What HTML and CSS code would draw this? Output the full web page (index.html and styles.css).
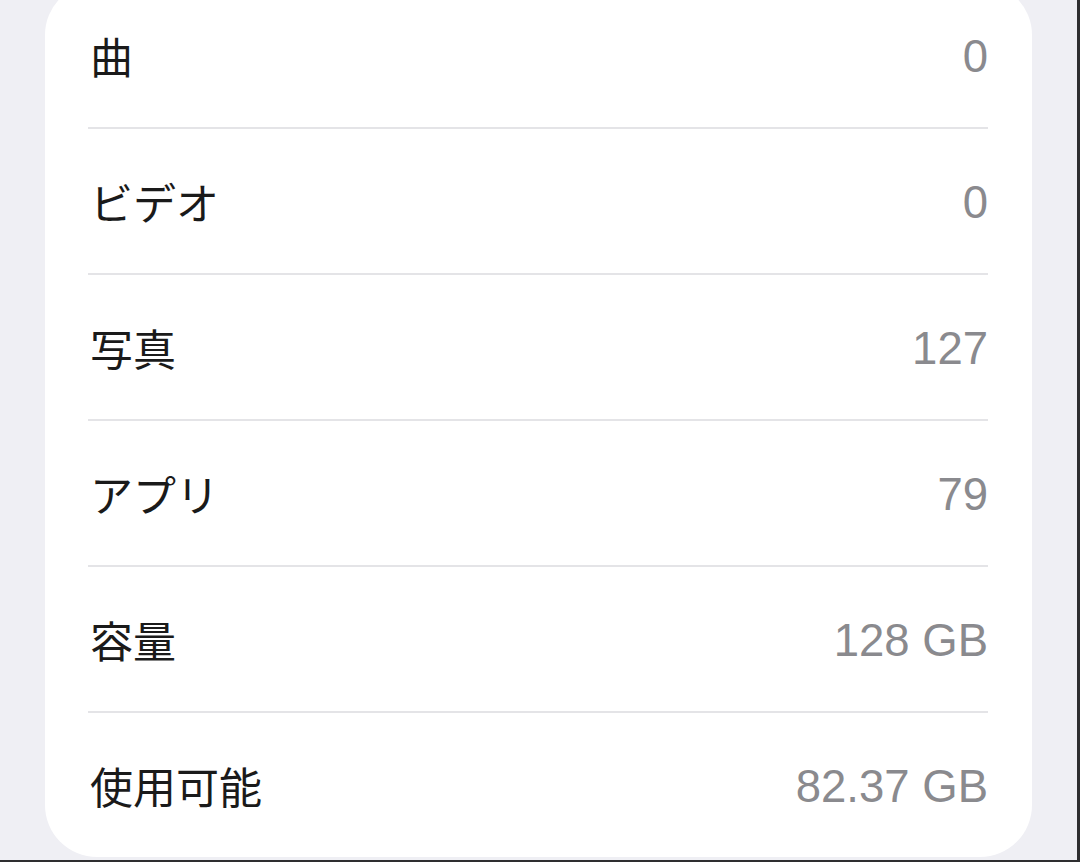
FILE: index.html
```html
<!DOCTYPE html>
<html lang="ja">
<head>
<meta charset="utf-8">
<link rel="stylesheet" href="styles.css">
</head>
<body>
<div class="screen">
  <div class="card">
    <div class="row"><span class="label">曲</span><span class="value">0</span></div>
    <div class="row"><span class="label">ビデオ</span><span class="value">0</span></div>
    <div class="row"><span class="label">写真</span><span class="value">127</span></div>
    <div class="row"><span class="label">アプリ</span><span class="value">79</span></div>
    <div class="row"><span class="label">容量</span><span class="value">128 GB</span></div>
    <div class="row last"><span class="label">使用可能</span><span class="value">82.37 GB</span></div>
  </div>
</div>
</body>
</html>
```
FILE: styles.css
```css
html, body {
  margin: 0;
  padding: 0;
}
body {
  background: #efeff4;
  overflow: hidden;
}
.screen {
  box-sizing: border-box;
  width: 1080px;
  height: 862px;
  background: #efeff4;
  border-right: 3px solid #2e2e30;
  border-bottom: 2px solid #2e2e30;
  overflow: hidden;
}
.card {
  margin-left: 45px;
  margin-top: -17px;
  width: 987px;
  box-sizing: border-box;
  background: #ffffff;
  border-radius: 52px;
  padding: 0 44px 0 43px;
}
.row {
  height: 144px;
  display: flex;
  align-items: center;
  justify-content: space-between;
  border-bottom: 2px solid #e4e4e7;
}
.row.last {
  height: 144px;
  border-bottom: none;
}
.label {
  font-family: "Noto Sans CJK JP", "Noto Sans", sans-serif;
  font-size: 43px;
  color: #1a1a1a;
  padding-left: 2px;
}
.value {
  font-family: "Liberation Sans", Arial, sans-serif;
  font-size: 45.5px;
  color: #8a8a8e;
  padding-top: 3px;
}
```
